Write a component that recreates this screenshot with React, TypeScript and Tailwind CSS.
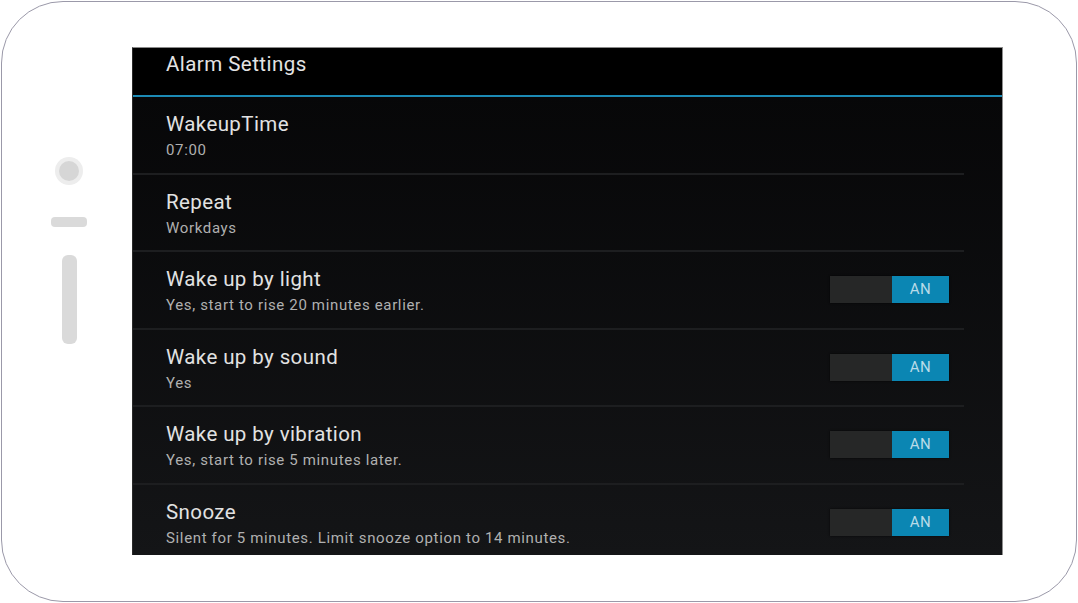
const settings = [
  { title: "WakeupTime", sub: "07:00", toggle: false },
  { title: "Repeat", sub: "Workdays", toggle: false },
  { title: "Wake up by light", sub: "Yes, start to rise 20 minutes earlier.", toggle: true },
  { title: "Wake up by sound", sub: "Yes", toggle: true },
  { title: "Wake up by vibration", sub: "Yes, start to rise 5 minutes later.", toggle: true },
  { title: "Snooze", sub: "Silent for 5 minutes. Limit snooze option to 14 minutes.", toggle: true },
];

function Toggle() {
  return (
    <div className="flex h-[27px] w-[119px] shrink-0 shadow-[0_0_2px_rgba(0,0,0,0.8)]">
      <div className="w-[62px] bg-[#262727]" />
      <div className="flex flex-1 items-center justify-center bg-[#0b86b3] text-[15px] tracking-[0.5px] text-[#b9dbe8]">
        AN
      </div>
    </div>
  );
}

export default function App() {
  return (
    <div className="h-[603px] w-[1078px] bg-white pl-[1px] pt-[1px] font-['Roboto',sans-serif]">
      <div className="flex h-[601px] w-[1076px] rounded-[62px] border border-[#9b99a9] bg-white">
        <div className="flex w-[130px] shrink-0 flex-col items-center pl-[4px] pt-[155px]">
          <div className="flex h-[28px] w-[28px] items-center justify-center rounded-full bg-[#ededed]">
            <div className="h-[20px] w-[20px] rounded-full bg-[#d6d6d6]" />
          </div>
          <div className="mt-[32px] h-[10px] w-[36px] rounded-[4px] bg-[#dadada]" />
          <div className="mt-[28px] h-[89px] w-[15px] rounded-[6px] bg-[#dadada]" />
        </div>

        <div className="mt-[45px] flex h-[508px] w-[871px] flex-col overflow-hidden border-r border-t border-r-[#8e8e8e] border-t-[#8a8a8a] border-l border-l-[#2a2a2a] bg-gradient-to-b from-[#060607] to-[#141517]">
          <div className="h-[47px] shrink-0 bg-black pl-[33px] pt-[4px] text-[20.5px] leading-[24px] tracking-[0.45px] text-[#e4e4e4]">
            Alarm Settings
          </div>
          <div className="h-[2px] shrink-0 bg-[#1c8ab4]" />
          <div className="mr-[38px] flex flex-col">
            {settings.map((s) => (
              <div
                key={s.title}
                className="flex h-[77.5px] shrink-0 items-start justify-between border-b-2 border-[#1d1e20] pl-[33px] pr-[15px]"
              >
                <div className="flex flex-col pt-[15px]">
                  <div className="text-[20.5px] leading-[24px] tracking-[0.4px] text-[#e2e2e2]">{s.title}</div>
                  <div className="mt-[5px] text-[15px] leading-[18px] tracking-[0.65px] text-[#b0b0b0]">{s.sub}</div>
                </div>
                {s.toggle ? (
                  <div className="pt-[24px]">
                    <Toggle />
                  </div>
                ) : null}
              </div>
            ))}
          </div>
        </div>
      </div>
    </div>
  );
}
